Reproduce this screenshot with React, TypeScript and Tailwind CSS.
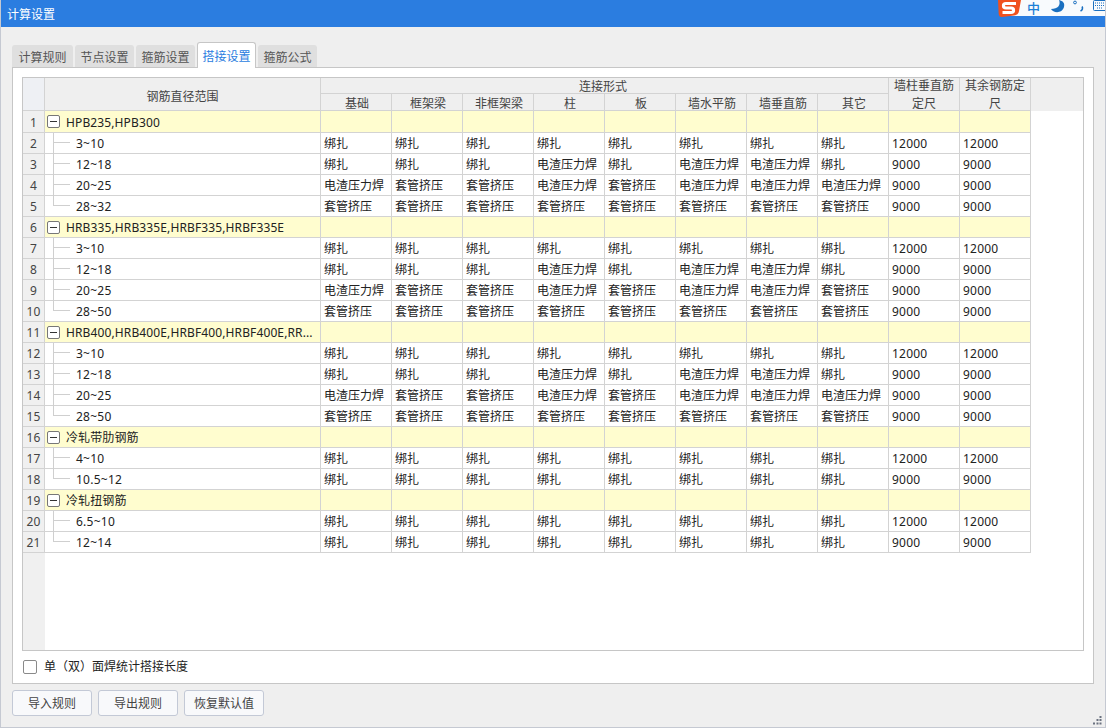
import React from "react";

const B = "绑扎", D = "电渣压力焊", T = "套管挤压";
type G = { title: string; rows: [string, string[], string, string][] };
const a = [B, B, B, B, B, B, B, B];
const b = [B, B, B, D, B, D, D, B];
const c = [D, T, T, D, T, D, D, D];
const c2 = [D, T, T, D, T, D, D, T];
const d = [T, T, T, T, T, T, T, T];
const groups: G[] = [
  { title: "HPB235,HPB300", rows: [["3~10", a, "12000", "12000"], ["12~18", b, "9000", "9000"], ["20~25", c, "9000", "9000"], ["28~32", d, "9000", "9000"]] },
  { title: "HRB335,HRB335E,HRBF335,HRBF335E", rows: [["3~10", a, "12000", "12000"], ["12~18", b, "9000", "9000"], ["20~25", c2, "9000", "9000"], ["28~50", d, "9000", "9000"]] },
  { title: "HRB400,HRB400E,HRBF400,HRBF400E,RR...", rows: [["3~10", a, "12000", "12000"], ["12~18", b, "9000", "9000"], ["20~25", c, "9000", "9000"], ["28~50", d, "9000", "9000"]] },
  { title: "冷轧带肋钢筋", rows: [["4~10", a, "12000", "12000"], ["10.5~12", a, "9000", "9000"]] },
  { title: "冷轧扭钢筋", rows: [["6.5~10", a, "12000", "12000"], ["12~14", a, "9000", "9000"]] },
];
const subHeads = ["基础", "框架梁", "非框架梁", "柱", "板", "墙水平筋", "墙垂直筋", "其它"];
const tabs = ["计算规则", "节点设置", "箍筋设置", "搭接设置", "箍筋公式"];
const cols = "grid grid-cols-[22px_276px_repeat(10,71px)]";
const line = "border-r border-b border-[#d3d3d3]";

function NumCell({ n, tall }: { n: number; tall?: boolean }) {
  return <div className={`${line} ${tall ? "h-[22px]" : "h-[21px]"} pt-[2px] bg-[#f0f0f0] flex items-center justify-center text-[#444] tracking-[0.2px]`}>{n}</div>;
}

export default function App() {
  let n = 0;
  return (
    <div className="w-[1106px] h-[728px] bg-[#efefef] flex flex-col relative overflow-hidden text-[12px] leading-[16px] text-[#222] border-l border-r border-b border-[#c5c9d2]" style={{ fontFamily: '"Noto Sans", "Noto Sans CJK SC", sans-serif' }}>
      <div className="h-[27px] -mx-px shrink-0 bg-[#2b7de0] text-white flex items-center pl-[7px] pt-[2px] text-[12px]">计算设置</div>
      <div className="flex items-end pl-[11px] h-[40px] shrink-0 gap-[2px] relative z-10">
        {tabs.map((t, i) =>
          i === 3 ? (
            <div key={t} className="h-[26px] w-[59px] pt-[2px] bg-white border border-b-0 border-[#c6c6c6] rounded-t-[3px] text-[#2b7de0] flex items-center justify-center -mb-[1px] text-[12px]">{t}</div>
          ) : (
            <div key={t} className={`h-[22px] pt-[3px] ${i === 0 ? "w-[61px]" : "w-[59px]"} bg-[#dfdfdf] rounded-t-[3px] text-[#555] flex items-center justify-center text-[12px]`}>{t}</div>
          )
        )}
      </div>
      <div className="mx-[11px] h-[617px] bg-white border border-[#c6c6c6] p-[9px] pb-0 flex flex-col shrink-0">
        <div className="h-[574px] border border-[#c6c6c6] flex flex-col bg-white overflow-hidden relative">
          <div className="flex bg-[#efefef] shrink-0">
            <div className={`${cols} grid-rows-[16px_17px] shrink-0`}>
              <div className={`${line} row-span-2 bg-[#eef0f4]`} />
              <div className={`${line} row-span-2 pt-[6px] flex items-center justify-center text-[#444]`}>钢筋直径范围</div>
              <div className={`${line} col-span-8 pt-[2px] pr-[3px] flex items-center justify-center text-[#444]`}>连接形式</div>
              <div className={`${line} row-span-2 pt-[1px] flex items-center justify-center text-center text-[#444] leading-[18px] px-[3px]`}>墙柱垂直筋定尺</div>
              <div className={`${line} row-span-2 pt-[1px] flex items-center justify-center text-center text-[#444] leading-[18px] px-[3px]`}>其余钢筋定尺</div>
              {subHeads.map((s) => (
                <div key={s} className={`${line} pt-[3px] pl-[2px] flex items-center justify-center text-[#444] leading-[14px]`}>{s}</div>
              ))}
            </div>
          </div>
          <div className="flex-1 flex flex-col">
            {groups.map((g, gi) => {
              n += 1;
              const hn = n;
              return (
                <React.Fragment key={g.title}>
                  <div className={cols}>
                    <NumCell n={hn} tall={gi === 0} />
                    <div className={`${line} bg-[#fffdcf] flex items-center pl-[2px] gap-[6px] whitespace-nowrap overflow-hidden tracking-[0.12px]`}>
                      <div className="w-[13px] h-[13px] border border-[#777] rounded-[2px] bg-white flex items-center justify-center shrink-0">
                        <div className="w-[7px] h-px bg-[#333]" />
                      </div>
                      <span className="pt-[2px]">{g.title}</span>
                    </div>
                    {Array.from({ length: 10 }).map((_, i) => (
                      <div key={i} className={`${line} bg-[#fffdcf]`} />
                    ))}
                  </div>
                  {g.rows.map((r, ri) => {
                    n += 1;
                    const last = ri === g.rows.length - 1;
                    return (
                      <div key={ri} className={cols}>
                        <NumCell n={n} />
                        <div className={`${line} relative pl-[31px] pt-[2px] flex items-center tracking-[0.25px]`}>
                          <div className={`absolute left-[8px] top-0 w-px bg-[#cfcfcf] ${last ? "h-[10px]" : "h-[21px]"}`} />
                          <div className="absolute left-[8px] top-[9px] w-[17px] h-px bg-[#cfcfcf]" />
                          {r[0]}
                        </div>
                        {r[1].map((v, i) => (
                          <div key={i} className={`${line} pl-[3px] pt-[2px] flex items-center whitespace-nowrap overflow-hidden`}>{v}</div>
                        ))}
                        <div className={`${line} pl-[3px] pt-[2px] flex items-center tracking-[0.2px]`}>{r[2]}</div>
                        <div className={`${line} pl-[3px] pt-[2px] flex items-center tracking-[0.2px]`}>{r[3]}</div>
                      </div>
                    );
                  })}
                </React.Fragment>
              );
            })}
            <div className="flex-1 w-[22px] bg-[#f0f0f0]" />
          </div>
        </div>
        <div className="flex items-center h-[32px] gap-[7px] pl-px pb-[1px]">
          <div className="w-[14px] h-[14px] border border-[#8a8a8a] rounded-[2px] bg-white" />
          <span>单（双）面焊统计搭接长度</span>
        </div>
      </div>
      <div className="flex gap-[6px] pl-[11px] pt-[6px]">
        {["导入规则", "导出规则", "恢复默认值"].map((t) => (
          <div key={t} className="w-[80px] h-[26px] pt-[2px] bg-[#f8f9fb] border border-[#c3c9d6] rounded-[3px] flex items-center justify-center text-[#444]">{t}</div>
        ))}
      </div>
      <svg className="absolute right-[3px] bottom-[2px]" width="9" height="9" viewBox="0 0 9 9" fill="#6b7280">
        <rect x="6.5" y="0" width="2" height="2" />
        <rect x="3.5" y="3" width="2" height="2" />
        <rect x="6.5" y="3" width="2" height="2" />
        <rect x="0" y="6.5" width="2" height="2" />
        <rect x="3.5" y="6.5" width="2" height="2" />
        <rect x="6.5" y="6.5" width="2" height="2" />
      </svg>
      <div className="absolute left-[1003px] top-0 w-[103px] h-[16px] bg-[#f8fafd]">
        <svg className="absolute -left-[9px] top-0" width="27" height="18" viewBox="0 0 27 18">
          <path d="M3 0H26L24 11C23.5 14 22 15 19 15.500L7 17C5 17.200 4 16 3.700 14Z" fill="#f0501e" />
          <path d="M21 3.500H11C7.500 3.500 7.500 8 11 8H16C19.500 8 19.500 12.500 16 12.500H7.500" stroke="#fff" strokeWidth="3" fill="none" />
        </svg>
        <span className="absolute left-[23px] top-[1px] h-[14px] text-[#1a7fd6] text-[13px] leading-[14px] font-medium">中</span>
        <svg className="absolute left-[46px] top-0" width="16" height="14" viewBox="0 0 16 14">
          <path d="M9 0C11 5 8 9 1 9C3 13 12 14 14 7C15 3 13 1 9 0Z" fill="#1a6fc0" />
        </svg>
        <svg className="absolute left-[68px] top-0" width="14" height="14" viewBox="0 0 14 14" fill="none">
          <circle cx="3" cy="2.500" r="1.400" stroke="#1a6fc0" />
          <path d="M10 6.500C11 8 10.500 10 8.500 11" stroke="#1a6fc0" strokeWidth="1.600" />
        </svg>
        <svg className="absolute left-[89px] top-0" width="15" height="12" viewBox="0 0 15 12" fill="none">
          <rect x="0.500" y="0.500" width="13" height="10" rx="1" stroke="#1a6fc0" />
          <path d="M2 3H12M2 5.500H12M4 8H10" stroke="#1a6fc0" strokeDasharray="1 1" />
        </svg>
      </div>
    </div>
  );
}
